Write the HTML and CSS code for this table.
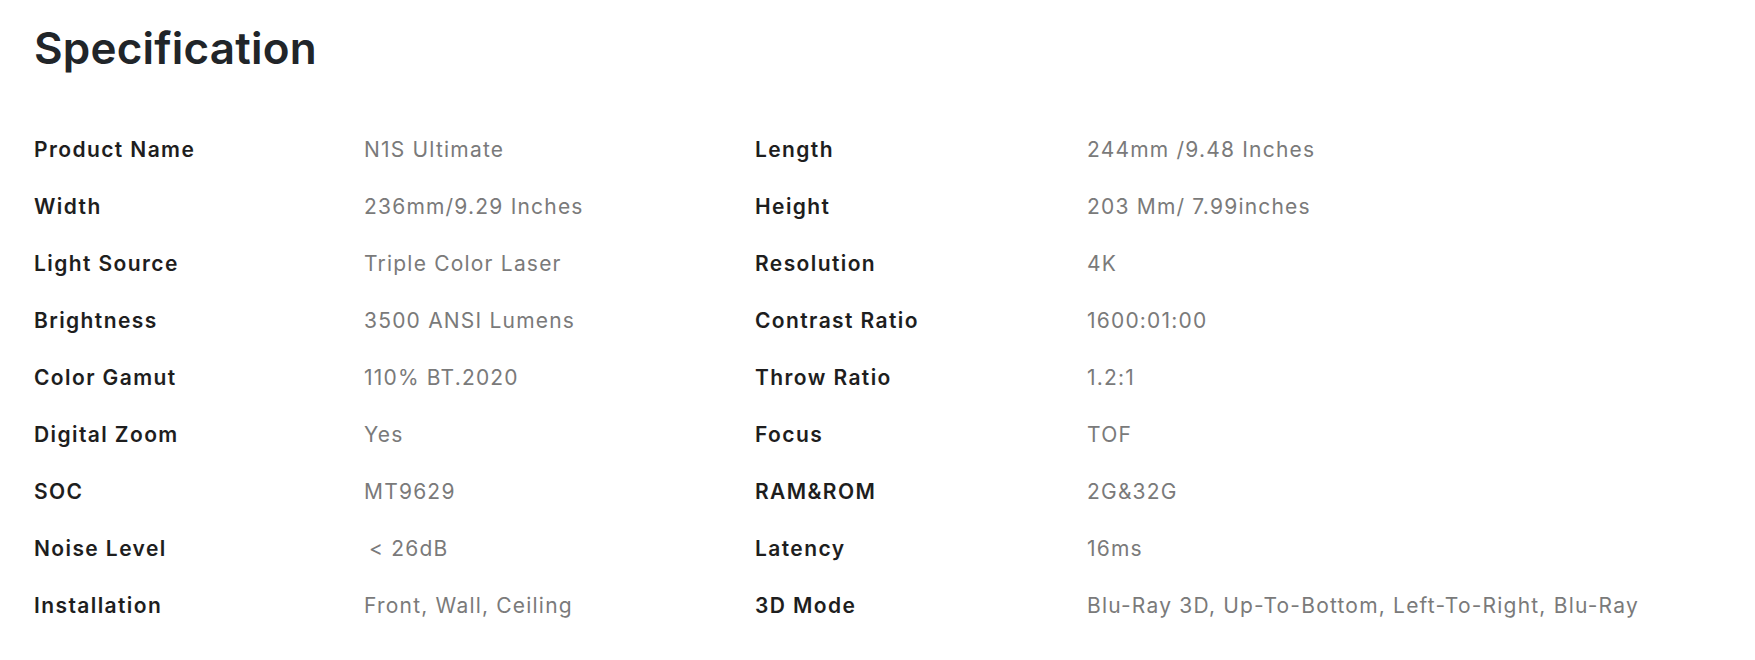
FILE: index.html
```html
<!DOCTYPE html>
<html lang="en">
<head>
<meta charset="utf-8">
<title>Specification</title>
<link rel="stylesheet" href="styles.css">
</head>
<body>
<section class="spec">
  <h2 class="spec-title">Specification</h2>
  <div class="spec-grid">
    <div class="label">Product Name</div><div class="value">N1S Ultimate</div>
    <div class="label">Length</div><div class="value">244mm /9.48 Inches</div>
    <div class="label">Width</div><div class="value">236mm/9.29 Inches</div>
    <div class="label">Height</div><div class="value">203 Mm/ 7.99inches</div>
    <div class="label">Light Source</div><div class="value">Triple Color Laser</div>
    <div class="label">Resolution</div><div class="value">4K</div>
    <div class="label">Brightness</div><div class="value">3500 ANSI Lumens</div>
    <div class="label">Contrast Ratio</div><div class="value">1600:01:00</div>
    <div class="label">Color Gamut</div><div class="value">110% BT.2020</div>
    <div class="label">Throw Ratio</div><div class="value">1.2:1</div>
    <div class="label">Digital Zoom</div><div class="value">Yes</div>
    <div class="label">Focus</div><div class="value">TOF</div>
    <div class="label">SOC</div><div class="value">MT9629</div>
    <div class="label">RAM&amp;ROM</div><div class="value">2G&amp;32G</div>
    <div class="label">Noise Level</div><div class="value value-indent">&lt; 26dB</div>
    <div class="label">Latency</div><div class="value">16ms</div>
    <div class="label">Installation</div><div class="value">Front, Wall, Ceiling</div>
    <div class="label">3D Mode</div><div class="value">Blu-Ray 3D, Up-To-Bottom, Left-To-Right, Blu-Ray</div>
  </div>
</section>
</body>
</html>
```
FILE: styles.css
```css
html, body {
  margin: 0;
  padding: 0;
  background: #ffffff;
}
body {
  font-family: Inter, "Open Sans", sans-serif;
}
.spec {
  padding: 20px 0 0 34px;
}
.spec-title {
  margin: 0;
  font-size: 44px;
  line-height: 56px;
  font-weight: 600;
  color: #212529;
  letter-spacing: 0.2px;
}
.spec-grid {
  margin-top: 45px;
  display: grid;
  grid-template-columns: 330px 391px 332px 1fr;
  grid-auto-rows: 57px;
  align-items: center;
}
.label {
  font-size: 21px;
  font-weight: 600;
  color: #1e1e1e;
  letter-spacing: 1.4px;
}
.value {
  font-size: 21px;
  font-weight: 400;
  color: #7a7a7a;
  letter-spacing: 1.2px;
}
.value-indent {
  padding-left: 5px;
}
```
